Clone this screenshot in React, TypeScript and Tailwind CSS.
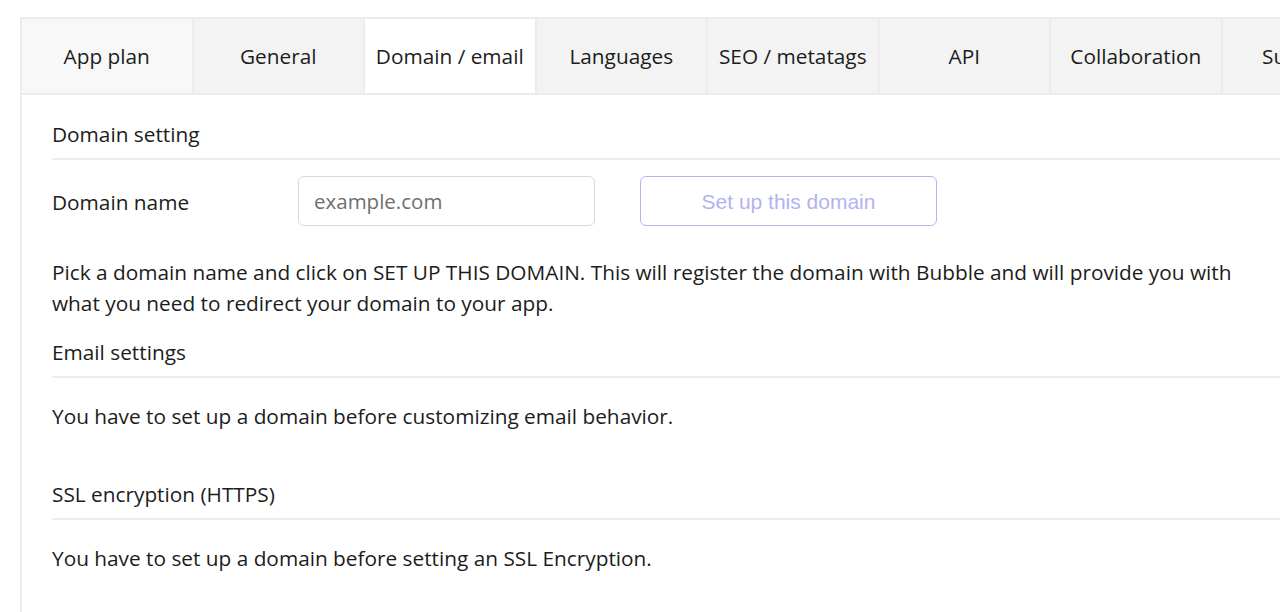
import React from "react";

const tabs = [
  "App plan",
  "General",
  "Domain / email",
  "Languages",
  "SEO / metatags",
  "API",
  "Collaboration",
  "Sub-apps",
];

function Heading({ children }: { children: React.ReactNode }) {
  return (
    <div className="border-b-2 border-[#ececec] pb-[9px] text-[20.8px] leading-[30px] text-[#1c1c1c]">
      {children}
    </div>
  );
}

export default function App() {
  return (
    <div
      className="h-[612px] w-full overflow-hidden bg-white pl-[20px] pt-[17px] text-[#1c1c1c]"
      style={{ fontFamily: '"Open Sans", "Noto Sans", sans-serif' }}
    >
      <div className="h-[700px] w-[1400px] border-l-2 border-t-2 border-[#ececec]">
        <div className="flex h-[76px] border-b-2 border-[#ececec]">
          {tabs.map((t, i) => (
            <div
              key={t}
              className={
                "flex h-[74px] w-[171.5px] shrink-0 items-center justify-center whitespace-nowrap border-r-2 border-[#ececec] pt-[2px] text-[20.8px] " +
                (i === 2 ? "bg-white" : i === 0 ? "bg-[#f8f8f8]" : "bg-[#f3f3f3]")
              }
            >
              {t}
            </div>
          ))}
        </div>
        <div className="pl-[30px] pt-[24px]">
          <Heading>Domain setting</Heading>
          <div className="mt-[16px] flex items-center">
            <div className="w-[246px] pt-[4px] text-[20.8px]">Domain name</div>
            <input
              placeholder="example.com"
              className="h-[50px] w-[297px] rounded-[6px] border border-[#d9d9d9] bg-white pl-[15px] text-[20.5px] text-[#333] outline-none placeholder:text-[#6f6f6f]"
            />
            <button
              className="ml-[45px] h-[50px] w-[297px] rounded-[6px] border border-[#b4b4f0] bg-white pt-[2px] text-[21px] text-[#b2b2f2]"
              style={{ fontFamily: '"Liberation Sans", Arial, sans-serif' }}
            >
              Set up this domain
            </button>
          </div>
          <p className="mt-[31px] w-[1215px] text-[20.8px] leading-[31px]">
            Pick a domain name and click on SET UP THIS DOMAIN. This will register the domain with Bubble and will
            provide you with what you need to redirect your domain to your app.
          </p>
          <div className="mt-[18px]">
            <Heading>Email settings</Heading>
          </div>
          <p className="mt-[23px] text-[20.8px] leading-[30px]">
            You have to set up a domain before customizing email behavior.
          </p>
          <div className="mt-[48px]">
            <Heading>SSL encryption (HTTPS)</Heading>
          </div>
          <p className="mt-[23px] text-[20.8px] leading-[30px]">
            You have to set up a domain before setting an SSL Encryption.
          </p>
        </div>
      </div>
    </div>
  );
}
